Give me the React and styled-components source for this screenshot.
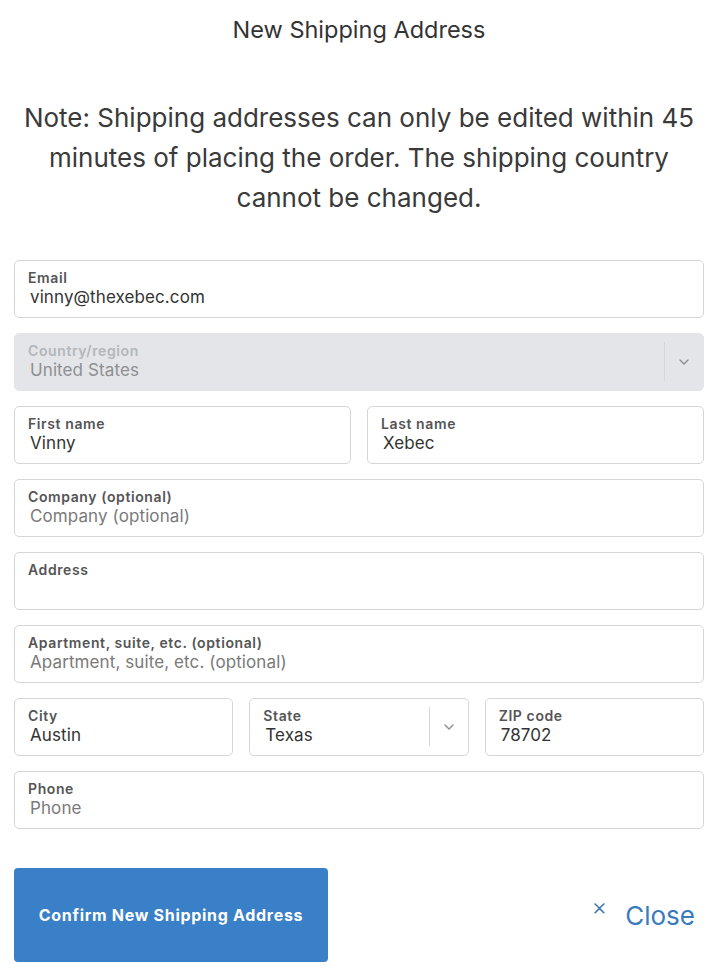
import React from "react";
import styled, { createGlobalStyle } from "styled-components";

const GlobalStyle = createGlobalStyle`
  body {
    margin: 0;
    background: #ffffff;
    font-family: Inter, "Noto Sans", "Liberation Sans", sans-serif;
    color: #333333;
  }
`;

const Chevron = () => (
  <svg width="12" height="8" viewBox="0 0 12 8" fill="none">
    <path d="M2 2l4 4 4-4" stroke="#8c8c8c" strokeWidth="1.4" strokeLinecap="round" strokeLinejoin="round" />
  </svg>
);

const Field = ({ label, value, placeholder, disabled }) => (
  <FieldBox disabled={disabled}>
    <FieldLabel disabled={disabled}>{label}</FieldLabel>
    <FieldValue disabled={disabled} empty={!value}>
      {value || placeholder || "\u00a0"}
    </FieldValue>
  </FieldBox>
);

const SelectField = ({ label, value, disabled }) => (
  <SelectBox disabled={disabled}>
    <SelectText>
      <FieldLabel disabled={disabled}>{label}</FieldLabel>
      <FieldValue disabled={disabled}>{value}</FieldValue>
    </SelectText>
    <SelectArrow disabled={disabled}>
      <Chevron />
    </SelectArrow>
  </SelectBox>
);

const App = () => {
  return (
    <Page>
      <GlobalStyle />
      <Title>New Shipping Address</Title>
      <Note>
        Note: Shipping addresses can only be edited within 45 minutes of placing
        the order. The shipping country cannot be changed.
      </Note>
      <Form>
        <Field label="Email" value="vinny@thexebec.com" />
        <SelectField label="Country/region" value="United States" disabled />
        <Row cols={2}>
          <Field label="First name" value="Vinny" />
          <Field label="Last name" value="Xebec" />
        </Row>
        <Field label="Company (optional)" placeholder="Company (optional)" />
        <Field label="Address" />
        <Field
          label="Apartment, suite, etc. (optional)"
          placeholder="Apartment, suite, etc. (optional)"
        />
        <Row cols={3}>
          <Field label="City" value="Austin" />
          <SelectField label="State" value="Texas" />
          <Field label="ZIP code" value="78702" />
        </Row>
        <Field label="Phone" placeholder="Phone" />
      </Form>
      <Actions>
        <ConfirmButton type="button">Confirm New Shipping Address</ConfirmButton>
        <CloseButton type="button">
          <CloseX>×</CloseX>
          Close
        </CloseButton>
      </Actions>
    </Page>
  );
};

const Page = styled.div`
  width: 720px;
  box-sizing: border-box;
  padding: 0 16px 9px 14px;
`;

const Title = styled.h2`
  margin: 0;
  padding-top: 15px;
  text-align: center;
  font-size: 23.5px;
  font-weight: 400;
  line-height: 30px;
  color: #333333;
`;

const Note = styled.p`
  margin: 53px 0 0;
  padding: 0 4px;
  text-align: center;
  font-size: 26px;
  font-weight: 400;
  line-height: 40px;
  color: #3a3a3a;
`;

const Form = styled.div`
  margin-top: 42px;
  display: flex;
  flex-direction: column;
  gap: 15px;
`;

const Row = styled.div`
  display: grid;
  grid-template-columns: repeat(${(p) => p.cols}, 1fr);
  gap: 16px;
`;

const FieldBox = styled.div`
  box-sizing: border-box;
  height: 58px;
  padding: 8px 13px 0;
  border: 1px solid ${(p) => (p.disabled ? "#e3e5e8" : "#d6d6d6")};
  border-radius: 5px;
  background: ${(p) => (p.disabled ? "#e3e5e8" : "#ffffff")};
`;

const SelectBox = styled(FieldBox)`
  display: flex;
  align-items: stretch;
  padding-right: 0;
`;

const SelectText = styled.div`
  flex: 1;
  min-width: 0;
`;

const SelectArrow = styled.div`
  width: 38px;
  margin: 0 0 9px;
  display: flex;
  align-items: center;
  justify-content: center;
  border-left: 1px solid ${(p) => (p.disabled ? "#d3d5d8" : "#d6d6d6")};
`;

const FieldLabel = styled.div`
  font-size: 14px;
  font-weight: 600;
  line-height: 17px;
  letter-spacing: 0.6px;
  color: ${(p) => (p.disabled ? "#b4b6b9" : "#555555")};
`;

const FieldValue = styled.div`
  margin: 1px 0 0 2px;
  font-size: 17px;
  line-height: 21px;
  letter-spacing: 0.1px;
  color: ${(p) => (p.disabled ? "#8d8f92" : p.empty ? "#7a7a7a" : "#333333")};
  white-space: nowrap;
`;

const Actions = styled.div`
  margin-top: 39px;
  display: flex;
  align-items: center;
  justify-content: space-between;
`;

const ConfirmButton = styled.button`
  width: 314px;
  height: 94px;
  border: none;
  border-radius: 4px;
  background: #3a80c8;
  color: #ffffff;
  font-family: inherit;
  font-size: 16px;
  font-weight: 700;
  letter-spacing: 0.7px;
  cursor: pointer;
`;

const CloseButton = styled.button`
  display: flex;
  align-items: center;
  gap: 18px;
  padding: 0 9px 0 0;
  border: none;
  background: none;
  color: #3a7bbd;
  font-family: inherit;
  font-size: 26px;
  font-weight: 400;
  cursor: pointer;
`;

const CloseX = styled.span`
  font-size: 24px;
  font-weight: 300;
  line-height: 1;
  margin-top: -16px;
  color: #3f78ad;
`;

export default App;
